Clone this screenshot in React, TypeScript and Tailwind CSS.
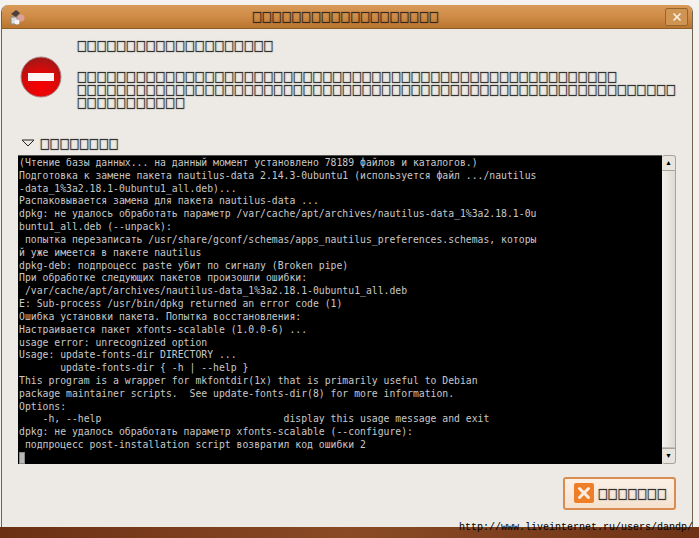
import React from 'react';
import { X } from 'lucide-react';

const box = (n: number) => '\u25A1'.repeat(n);

const lines = [
  '(Чтение базы данных... на данный момент установлено 78189 файлов и каталогов.)',
  'Подготовка к замене пакета nautilus-data 2.14.3-0ubuntu1 (используется файл .../nautilus',
  '-data_1%3a2.18.1-0ubuntu1_all.deb)...',
  'Распаковывается замена для пакета nautilus-data ...',
  'dpkg: не удалось обработать параметр /var/cache/apt/archives/nautilus-data_1%3a2.18.1-0u',
  'buntu1_all.deb (--unpack):',
  ' попытка перезаписать /usr/share/gconf/schemas/apps_nautilus_preferences.schemas, которы',
  'й уже имеется в пакете nautilus',
  'dpkg-deb: подпроцесс paste убит по сигналу (Broken pipe)',
  'При обработке следующих пакетов произошли ошибки:',
  ' /var/cache/apt/archives/nautilus-data_1%3a2.18.1-0ubuntu1_all.deb',
  'E: Sub-process /usr/bin/dpkg returned an error code (1)',
  'Ошибка установки пакета. Попытка восстановления:',
  'Настраивается пакет xfonts-scalable (1.0.0-6) ...',
  'usage error: unrecognized option',
  'Usage: update-fonts-dir DIRECTORY ...',
  '       update-fonts-dir { -h | --help }',
  'This program is a wrapper for mkfontdir(1x) that is primarily useful to Debian',
  'package maintainer scripts.  See update-fonts-dir(8) for more information.',
  'Options:',
  '    -h, --help                               display this usage message and exit',
  'dpkg: не удалось обработать параметр xfonts-scalable (--configure):',
  ' подпроцесс post-installation script возвратил код ошибки 2',
];

const App: React.FC = () => {
  return (
    <div className="w-[699px] h-[538px] overflow-hidden flex flex-col bg-[#f4f2ee]">
      <div className="flex flex-1 pt-[5px] pl-[1px] min-h-0">
        <div className="w-[692px] flex flex-col rounded-t-[7px] overflow-hidden border-x border-[#6f6252] bg-[#edeae5]">
          {/* Title bar */}
          <div className="h-[24px] shrink-0 flex items-center justify-between pl-[6px] pr-[4px] border-b border-[#8f5f2a] bg-gradient-to-b from-[#d99a58] via-[#cf8c47] to-[#b9752f]">
            <svg width="18" height="18" viewBox="0 0 18 18">
              <rect x="3" y="9" width="6" height="7" fill="#dcdcdc" stroke="#8a8a8a" />
              <circle cx="13" cy="10" r="3.5" fill="#dba09a" />
              <circle cx="9" cy="14" r="2.5" fill="#f4f4f4" />
              <path d="M3 6l5-4 4 3-4 4z" fill="#4a4040" />
            </svg>
            <div className="font-['DejaVu_Sans'] text-[10.4px] font-bold leading-none text-[#2a2018] scale-y-[1.35] [text-shadow:0_0_1px_#2a2018]">{box(19)}</div>
            <div className="w-[23px] h-[18px] flex items-center justify-center rounded-[2px] border border-[#96652f] bg-[#cf9352]">
              <X size={12} strokeWidth={3.5} className="text-[#f7efe5]" />
            </div>
          </div>

          {/* Message */}
          <div className="flex flex-1 flex-col min-h-0 pl-[16px] pr-[15px]">
            <div className="flex pt-[11.7px]">
              <svg width="42" height="42" viewBox="0 0 42 42" className="mt-[15.3px] ml-[2px] shrink-0">
                <defs>
                  <radialGradient id="stop" cx="50%" cy="75%" r="70%">
                    <stop offset="0" stopColor="#f80000" />
                    <stop offset="0.6" stopColor="#d90a0a" />
                    <stop offset="1" stopColor="#a51616" />
                  </radialGradient>
                </defs>
                <circle cx="21" cy="21" r="20" fill="url(#stop)" stroke="#a88" strokeWidth="1" />
                <rect x="8" y="17" width="26" height="8" fill="#fdf4f4" />
              </svg>
              <div className="ml-[15px] font-['DejaVu_Sans'] text-[10.4px] font-bold leading-[9.6px] text-[#222] [text-shadow:0_0_1px_#222]">
                <div className="whitespace-nowrap scale-y-[1.35] origin-center">{box(20)}</div>
                <div className="mt-[21.4px] whitespace-nowrap scale-y-[1.35]">{box(55)}</div>
                <div className="mt-[3.4px] whitespace-nowrap scale-y-[1.35]">{box(61)}</div>
                <div className="mt-[3.4px] whitespace-nowrap scale-y-[1.35]">{box(11)}</div>
              </div>
            </div>

            {/* Expander */}
            <div className="flex items-center mt-[29.7px] h-[13px]">
              <svg width="14" height="8" viewBox="0 0 14 8" className="ml-[3px]">
                <path d="M1 1h12L7 7z" fill="none" stroke="#222" strokeWidth="1" />
              </svg>
              <div className="ml-[5px] font-['DejaVu_Sans'] text-[10.4px] font-bold leading-[9.6px] text-[#222] scale-y-[1.35] [text-shadow:0_0_1px_#222]">{box(8)}</div>
            </div>

            {/* Terminal */}
            <div className="flex mt-[5px] h-[309px] shrink-0">
              <div className="w-[644px] bg-black border-t border-[#555] overflow-hidden pl-[1px] pt-[1px] font-['DejaVu_Sans_Mono'] text-[9.78px] leading-[12.83px] text-[#c8c8c8] whitespace-pre">
                {lines.map((l, i) => (
                  <div key={i} className="h-[12.83px]">{l}</div>
                ))}
                <div className="w-[6px] h-[12px] bg-[#b8b8b8] border border-[#888]" />
              </div>
              <div className="w-[14px] flex flex-col rounded-[3px] border border-[#a8a49c] border-l-0 bg-[#e8e5df]">
                <div className="h-[15px] flex items-center justify-center border-b border-[#a8a49c] text-[7px] leading-none text-black">▲</div>
                <div className="flex-1 bg-gradient-to-r from-[#f3f1ed] to-[#dedad3] border-b border-[#c4c0b8]" />
                <div className="h-[15px] flex items-center justify-center border-t border-[#a8a49c] text-[7px] leading-none text-black">▼</div>
              </div>
            </div>

            {/* Button */}
            <div className="flex justify-end mt-[13px] pr-[1px]">
              <div className="w-[113px] h-[33px] flex items-center rounded-[3px] border-2 border-[#d98c50] bg-gradient-to-b from-[#fbf0e6] to-[#f5e2d0] pl-[9px]">
                <div className="w-[20px] h-[20px] rounded-[2px] flex items-center justify-center bg-[#ee7f28]">
                  <X size={18} strokeWidth={4} className="text-[#fbeee0]" />
                </div>
                <div className="ml-[4px] font-['DejaVu_Sans'] text-[10.4px] font-bold leading-none text-[#222] scale-y-[1.35] [text-shadow:0_0_1px_#222]">{box(7)}</div>
              </div>
            </div>
          </div>
        </div>
      </div>

      {/* Desktop strip */}
      <div className="h-[11px] shrink-0 relative bg-gradient-to-r from-[#6b2f14] via-[#8a4a25] to-[#6e3316]">
        <div className="absolute right-[6px] -top-[6px] font-['Liberation_Mono'] text-[10px] leading-[13px] text-black whitespace-nowrap">http://www.liveinternet.ru/users/dandp/</div>
      </div>
    </div>
  );
};

export default App;
